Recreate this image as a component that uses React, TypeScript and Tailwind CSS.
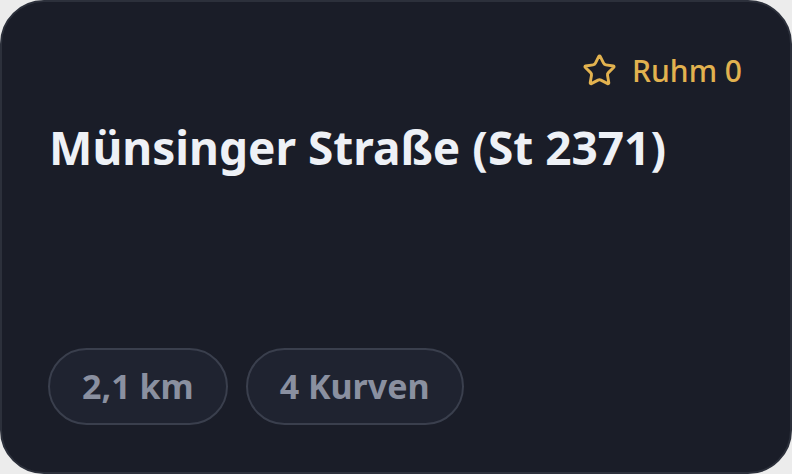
import { Star } from 'lucide-react';

const stats = ['2,1 km', '4 Kurven'];

export default function App() {
    return (
        <div className="h-[474px] w-[792px] bg-[#ececec]" style={{ fontFamily: '"Noto Sans", sans-serif' }}>
            <div className="flex h-full flex-col rounded-[44px] border-2 border-[#2c303b] bg-[#1a1d28] px-[46px] pt-[51px] pb-[47px]">
                {/* Header */}
                <div className="flex items-center justify-end gap-[15px] pr-[2px]">
                    <Star className="h-[35px] w-[35px] text-[#e2b24f]" strokeWidth={2} />
                    <span className="text-[30px] leading-none font-medium text-[#e2b24f]">Ruhm 0</span>
                </div>

                <h1 className="mt-[36px] pl-[1px] text-[46px] leading-none font-bold text-[#eef1f6]">
                    Münsinger Straße (St 2371)
                </h1>

                <div className="mt-auto flex gap-[18px]">
                    {stats.map((s) => (
                        <div
                            key={s}
                            className="flex h-[77px] items-center rounded-full border-2 border-[#3a3f4d] bg-[#1f2330] px-[32px] text-[34px] font-bold text-[#8a90a0]"
                        >
                            {s}
                        </div>
                    ))}
                </div>
            </div>
        </div>
    );
}
